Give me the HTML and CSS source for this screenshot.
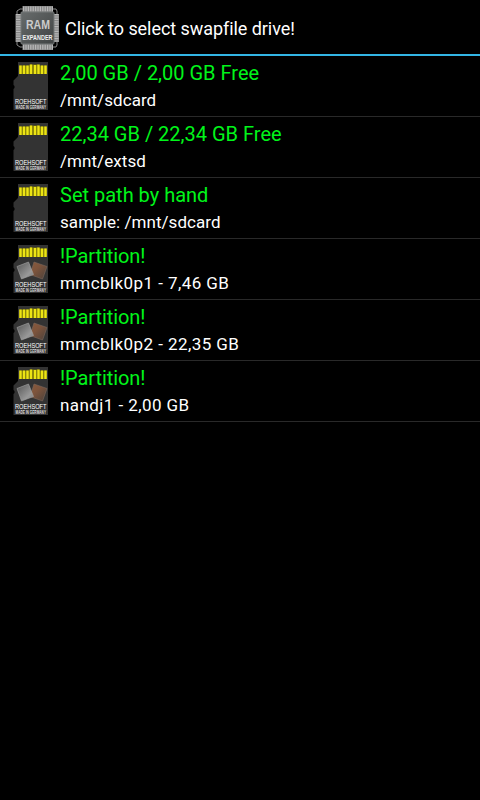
FILE: index.html
```html
<!DOCTYPE html>
<html lang="en">
<head>
    <meta charset="UTF-8">
    <meta name="viewport" content="width=device-width, initial-scale=1.0">
    <title>RAM Expander</title>
    <link rel="stylesheet" href="styles.css">
</head>
<body>
    <!-- Shared icon artwork -->
    <svg class="sprites" aria-hidden="true">
        <defs>
            <linearGradient id="silver" x1="0" y1="0" x2="1" y2="1">
                <stop offset="0" stop-color="#555"/>
                <stop offset="0.7" stop-color="#999"/>
                <stop offset="1" stop-color="#777"/>
            </linearGradient>
            <linearGradient id="copper" x1="0" y1="0" x2="1" y2="1">
                <stop offset="0" stop-color="#8a5a3c"/>
                <stop offset="0.4" stop-color="#7d543c"/>
                <stop offset="1" stop-color="#4a403a"/>
            </linearGradient>
            <linearGradient id="chipface" x1="0" y1="0" x2="1" y2="1">
                <stop offset="0" stop-color="#686c6c"/>
                <stop offset="1" stop-color="#404343"/>
            </linearGradient>
        </defs>
        <symbol id="card" viewBox="0 0 36 48">
            <path d="M5 0H35V48H0.5V27L1.5 26V24L0.5 23V18.5L5 14Z" fill="#333"/>
            <path d="M6 12V3.5H16L17 2.5H25L26 3.5H34V12Z" fill="#77700a"/>
            <path d="M7.5 3.5V12M11 3.5V12M14.5 3.5V12M18 2.5V12M22 3V12M25.5 2.5V12M29 3.5V12M32.5 3.5V12" stroke="#ece414" stroke-width="2.4"/>
            <text x="2" y="41.8" textLength="31.5" lengthAdjust="spacingAndGlyphs" class="card-brand">ROEHSOFT</text>
            <text x="2.5" y="47" textLength="30.5" lengthAdjust="spacingAndGlyphs" class="card-origin">MADE IN GERMANY</text>
        </symbol>
        <symbol id="partition" viewBox="0 0 36 48">
            <use href="#card" width="36" height="48"/>
            <path d="M21 17L34 21.5L29.5 34L17 29.5Z" fill="url(#copper)" stroke="#7b675b" stroke-width="0.6"/>
            <path d="M4 21.5L15.5 17L20.5 29.5L8.5 34Z" fill="url(#silver)" stroke="#a5a5a5" stroke-width="0.6"/>
        </symbol>
    </svg>

    <header class="titlebar">
        <svg class="chip" viewBox="0 0 45 44">
            <path d="M2 9V5L5 3H8M37 3H41L42 5V9M2 35V39L5 41H8M37 41H41L42 39V35" stroke="#888" fill="none"/>
            <path d="M7.5 3H38M7.5 41H38" stroke="#858585" stroke-width="6"/>
            <path d="M3.5 8V36M41 8V36" stroke="#858585" stroke-width="6"/>
            <path d="M8 3H38M8 41H38" stroke="#b8b8b8" stroke-width="5" stroke-dasharray="1.2 1.2"/>
            <path d="M3.5 8V36M41 8V36" stroke="#b8b8b8" stroke-width="5" stroke-dasharray="1.2 1.2"/>
            <rect x="6" y="6" width="33" height="32" rx="1" fill="url(#chipface)" stroke="#757979"/>
            <text x="11" y="22.6" textLength="24" lengthAdjust="spacingAndGlyphs" class="chip-name">RAM</text>
            <text x="7.5" y="33.5" textLength="30" lengthAdjust="spacingAndGlyphs" class="chip-sub">EXPANDER</text>
        </svg>
        <h1>Click to select swapfile drive!</h1>
    </header>

    <ul class="drives">
        <li class="drive">
            <svg class="icon"><use href="#card"/></svg>
            <div class="info">
                <h2>2,00 GB / 2,00 GB Free</h2>
                <p>/mnt/sdcard</p>
            </div>
        </li>
        <li class="drive">
            <svg class="icon"><use href="#card"/></svg>
            <div class="info">
                <h2>22,34 GB / 22,34 GB Free</h2>
                <p>/mnt/extsd</p>
            </div>
        </li>
        <li class="drive">
            <svg class="icon"><use href="#card"/></svg>
            <div class="info">
                <h2>Set path by hand</h2>
                <p>sample: /mnt/sdcard</p>
            </div>
        </li>
        <li class="drive partition">
            <svg class="icon"><use href="#partition"/></svg>
            <div class="info">
                <h2>!Partition!</h2>
                <p>mmcblk0p1 - 7,46 GB</p>
            </div>
        </li>
        <li class="drive partition">
            <svg class="icon"><use href="#partition"/></svg>
            <div class="info">
                <h2>!Partition!</h2>
                <p>mmcblk0p2 - 22,35 GB</p>
            </div>
        </li>
        <li class="drive partition">
            <svg class="icon"><use href="#partition"/></svg>
            <div class="info">
                <h2>!Partition!</h2>
                <p>nandj1 - 2,00 GB</p>
            </div>
        </li>
    </ul>
</body>
</html>
```
FILE: styles.css
```css
* {
    box-sizing: border-box;
    margin: 0;
    padding: 0;
}

body {
    min-height: 100vh;
    background: #000;
    color: #fff;
    font-family: Roboto, sans-serif;
}

/* Symbols only, takes no room */
.sprites {
    display: block;
    width: 0;
    height: 0;
}

.titlebar {
    display: flex;
    align-items: center;
    height: 56px;
    padding-left: 15px;
    border-bottom: 2px solid #33b5e5;
}

.chip {
    width: 45px;
    height: 44px;
    margin-top: 2px;
    margin-right: 5px;
}

.titlebar h1 {
    font-size: 18px;
    font-weight: 400;
    line-height: 24px;
    letter-spacing: -0.06px;
    white-space: nowrap;
    margin-top: 3px;
}

.drives {
    list-style: none;
}

.drive {
    display: flex;
    height: 61px;
    padding: 6px 0 0 13px;
    border-bottom: 1px solid #292929;
}

.icon {
    width: 36px;
    height: 48px;
    margin-right: 11px;
}

.info {
    white-space: nowrap;
}

.info h2 {
    color: #00f51a;
    font-size: 20px;
    font-weight: 400;
    line-height: 22px;
}

.info p {
    font-size: 17px;
    line-height: 20px;
    letter-spacing: 0.06px;
    margin-top: 6px;
}

.partition h2 {
    letter-spacing: -0.08px;
}

.partition p {
    letter-spacing: 0.43px;
}

/* Lettering inside the icons */
.card-brand,
.card-origin,
.chip-name,
.chip-sub {
    font-family: "Liberation Sans", sans-serif;
    font-weight: 700;
}

.card-brand {
    font-size: 7px;
    font-weight: 400;
    fill: #fff;
}

.card-origin {
    font-size: 4.8px;
    fill: #ddd;
}

.chip-name {
    font-size: 13px;
    fill: #ccc;
}

.chip-sub {
    font-size: 6.6px;
    fill: #f0f0f0;
}
```
